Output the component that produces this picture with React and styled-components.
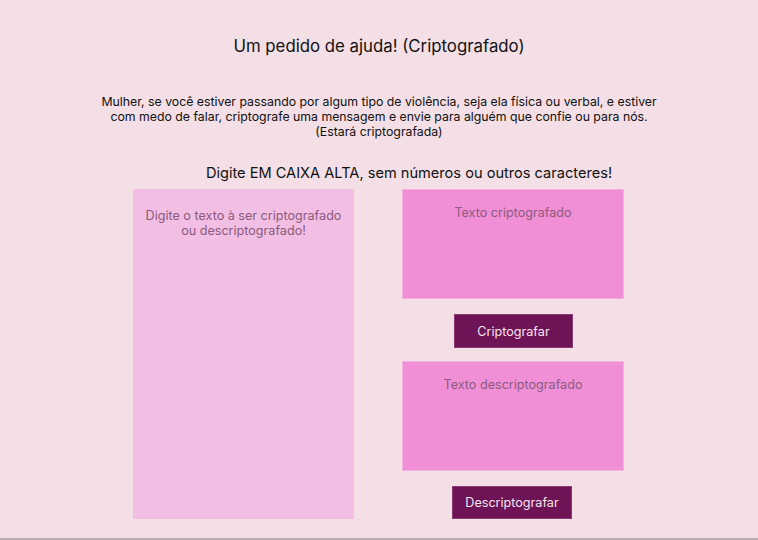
import React from "react";
import styled, { createGlobalStyle } from "styled-components";

const GlobalStyle = createGlobalStyle`
  body {
    margin: 0;
    background-color: #f3dfe5;
    font-family: "Inter", "Noto Sans", sans-serif;
    color: #111;
  }
`

const Page = styled.main`
  display: flex;
  flex-direction: column;
  align-items: center;
  padding-top: 35px;
  height: 540px;
  box-sizing: border-box;
  border-bottom: 2px solid #b8adb2;
`

const Title = styled.h1`
  margin: 0;
  font-size: 16.8px;
  font-weight: 400;
  line-height: 22px;
`

const Intro = styled.p`
  margin: 37px 0 0;
  font-size: 12.3px;
  line-height: 15px;
  text-align: center;
  white-space: nowrap;
`

const Hint = styled.h2`
  margin: 24px 0 0 60px;
  font-size: 14.6px;
  font-weight: 400;
  line-height: 20px;
`

const Workspace = styled.section`
  display: flex;
  gap: 48px;
  margin: 6px 0 0 -1px;
`

const Column = styled.div`
  display: flex;
  flex-direction: column;
  align-items: center;
`

const TextBox = styled.textarea`
  width: ${(p) => p.$w}px;
  height: ${(p) => p.$h}px;
  box-sizing: border-box;
  resize: none;
  border: 1px solid ${(p) => p.$border};
  background-color: ${(p) => p.$bg};
  padding: ${(p) => p.$pt}px 8px 0;
  font-family: "Inter", "Noto Sans", sans-serif;
  font-size: 12.6px;
  line-height: 15px;
  text-align: center;
  outline: none;

  &::placeholder {
    color: #8c5a7d;
  }
`

const Action = styled.button`
  width: ${(p) => p.$w}px;
  height: ${(p) => p.$h}px;
  margin: ${(p) => p.$mt}px 0 ${(p) => p.$mb}px ${(p) => p.$ml}px;
  border: 1px solid #8a3a72;
  background-color: #6e1356;
  color: #f6e6f0;
  font-family: "Inter", "Noto Sans", sans-serif;
  font-size: 12.6px;
  cursor: pointer;
`

export default function App() {
  return (
    <>
      <GlobalStyle />
      <Page>
        <Title>Um pedido de ajuda! (Criptografado)</Title>
        <Intro>
          Mulher, se você estiver passando por algum tipo de violência, seja ela física ou verbal, e estiver
          <br />com medo de falar, criptografe uma mensagem e envie para alguém que confie ou para nós.
          <br />(Estará criptografada)
        </Intro>
        <Hint>Digite EM CAIXA ALTA, sem números ou outros caracteres!</Hint>
        <Workspace>
          <Column>
            <TextBox
              $w={221}
              $h={330}
              $pt={18}
              $bg="#f2bee4"
              $border="#f2bee4"
              placeholder="Digite o texto à ser criptografado ou descriptografado!"
            />
          </Column>
          <Column>
            <TextBox
              $w={222}
              $h={110}
              $pt={15}
              $bg="#f08fd6"
              $border="#f4b2e2"
              placeholder="Texto criptografado"
            />
            <Action $w={119} $h={34} $mt={15} $mb={13} $ml={1}>Criptografar</Action>
            <TextBox
              $w={222}
              $h={110}
              $pt={15}
              $bg="#f08fd6"
              $border="#f4b2e2"
              placeholder="Texto descriptografado"
            />
            <Action $w={120} $h={33} $mt={15} $mb={0} $ml={-2}>Descriptografar</Action>
          </Column>
        </Workspace>
      </Page>
    </>
  );
}
